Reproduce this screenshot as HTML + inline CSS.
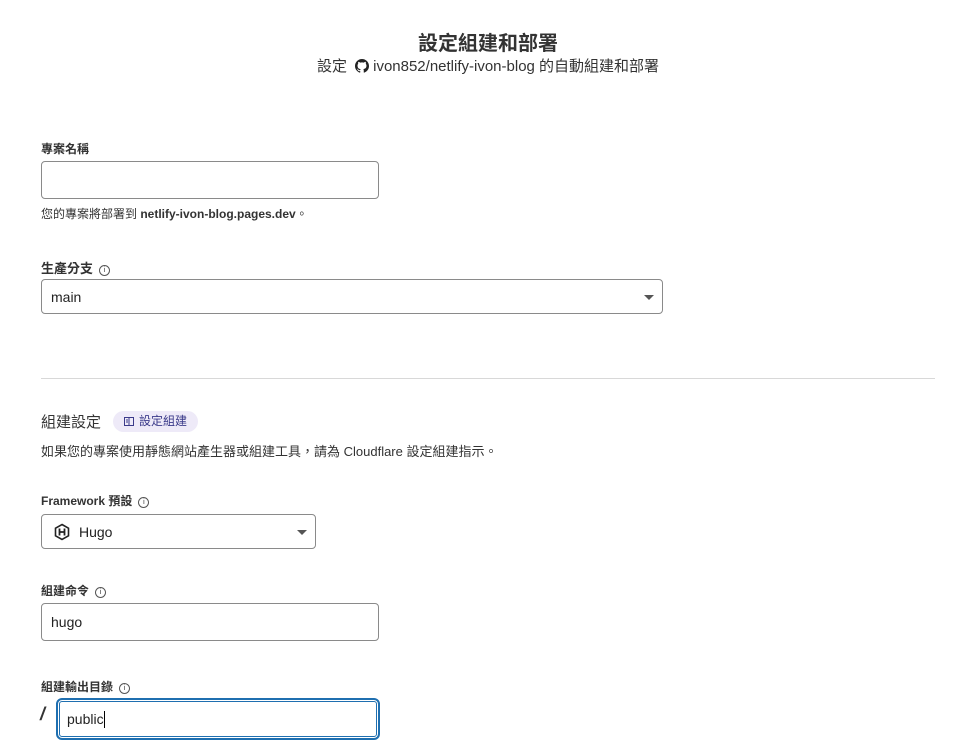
<!DOCTYPE html>
<html><head><meta charset="utf-8"><style>
body{margin:0;width:972px;height:752px;background:#fff;font-family:"Liberation Sans","Noto Sans CJK TC",sans-serif;color:#222;position:relative;overflow:hidden}
.a{position:absolute;white-space:nowrap}
.lbl{font-size:12px;font-weight:bold;color:#333}
.box{position:absolute;border:1px solid #8a8a8a;border-radius:4px;box-sizing:border-box;background:#fff;font-size:14px;color:#222;padding-left:9px;display:flex;align-items:center}
.i{display:inline-block;width:9px;height:9px;border:1px solid #555;border-radius:50%;font-size:7px;line-height:9px;text-align:center;margin-left:6px;vertical-align:1px;font-weight:normal}
.car{position:absolute;right:8px;top:50%;margin-top:-2px;border-left:5px solid transparent;border-right:5px solid transparent;border-top:5px solid #555}
</style></head><body>
<div class="a" style="left:0;width:976px;text-align:center;top:27px;font-size:20px;font-weight:bold;color:#333">設定組建和部署</div>
<div class="a" style="left:0;width:976px;text-align:center;top:55px;font-size:15px;color:#333">設定 <svg width="14" height="14" viewBox="0 0 16 16" style="vertical-align:-2px;margin:0 4px"><path fill="#222" d="M8 0C3.6 0 0 3.6 0 8c0 3.5 2.3 6.5 5.5 7.6.4.1.5-.2.5-.4v-1.4c-2.2.5-2.7-1-2.7-1-.4-.9-.9-1.200-.9-1.2-.7-.5.1-.5.1-.5.8.1 1.2.8 1.2.8.7 1.3 1.9.9 2.3.7.1-.5.3-.9.5-1.1-1.8-.2-3.6-.9-3.6-4 0-.9.3-1.6.8-2.1-.1-.2-.4-1 .1-2.1 0 0 .7-.2 2.2.8.6-.2 1.3-.3 2-.3s1.4.1 2 .3c1.5-1 2.2-.8 2.2-.8.4 1.1.2 1.9.1 2.1.5.6.8 1.3.8 2.1 0 3.1-1.9 3.7-3.6 3.9.3.3.5.8.5 1.5v2.2c0 .2.1.5.6.4C13.7 14.5 16 11.5 16 8c0-4.4-3.6-8-8-8z"/></svg>ivon852/netlify-ivon-blog 的自動組建和部署</div>

<div class="a lbl" style="left:41px;top:140px">專案名稱</div>
<div class="box" style="left:41px;top:161px;width:338px;height:38px"></div>
<div class="a" style="left:41px;top:205px;font-size:12px;color:#333">您的專案將部署到 <b>netlify-ivon-blog.pages.dev</b>。</div>

<div class="a lbl" style="left:41px;top:258px;font-size:13px">生產分支<span class="i">i</span></div>
<div class="box" style="left:41px;top:279px;width:622px;height:35px">main<span class="car"></span></div>

<div class="a" style="left:41px;top:378px;width:894px;height:1px;background:#d8d8d8"></div>

<div class="a" style="left:41px;top:411px;font-size:15px;color:#333">組建設定</div>
<div class="a" style="left:113px;top:411px;width:85px;height:21px;border-radius:11px;background:#eeeaf8;font-size:12px;color:#3b3a8a;line-height:21px;text-align:center"><svg width="10" height="9" viewBox="0 0 10 9" style="vertical-align:-1px;margin-right:5px"><rect x="0.5" y="0.5" width="9" height="8" fill="none" stroke="#3b3a8a"/><path d="M5 1V8M2 3H4M2 5H4" stroke="#3b3a8a"/></svg>設定組建</div>
<div class="a" style="left:41px;top:441px;font-size:13px;color:#333">如果您的專案使用靜態網站產生器或組建工具，請為 Cloudflare 設定組建指示。</div>

<div class="a lbl" style="left:41px;top:492px">Framework 預設<span class="i">i</span></div>
<div class="box" style="left:41px;top:514px;width:275px;height:35px"><svg width="18" height="18" viewBox="0 0 18 18" style="margin-right:8px;margin-left:2px"><path d="M9 1.5L15.5 5.2V12.8L9 16.5 2.5 12.8V5.2Z" fill="none" stroke="#222" stroke-width="1.6"/><path d="M6.5 5.5V12.5M11.5 5.5V12.5M6.5 9H11.5" stroke="#222" stroke-width="1.8"/></svg>Hugo<span class="car"></span></div>

<div class="a lbl" style="left:41px;top:582px">組建命令<span class="i">i</span></div>
<div class="box" style="left:41px;top:603px;width:338px;height:38px">hugo</div>

<div class="a lbl" style="left:41px;top:678px">組建輸出目錄<span class="i">i</span></div>
<div class="a" style="left:40px;top:704px;font-size:18px;font-weight:bold;font-style:italic;color:#333">/</div>
<div class="box" style="left:56px;top:698px;width:324px;height:42px;border:2px solid #1f6fb0;border-radius:6px;box-shadow:inset 0 0 0 1px #fff,inset 0 0 0 2px #1f6fb0;padding-left:9px">public<span style="display:inline-block;width:1px;height:17px;background:#000"></span></div>
</body></html>
